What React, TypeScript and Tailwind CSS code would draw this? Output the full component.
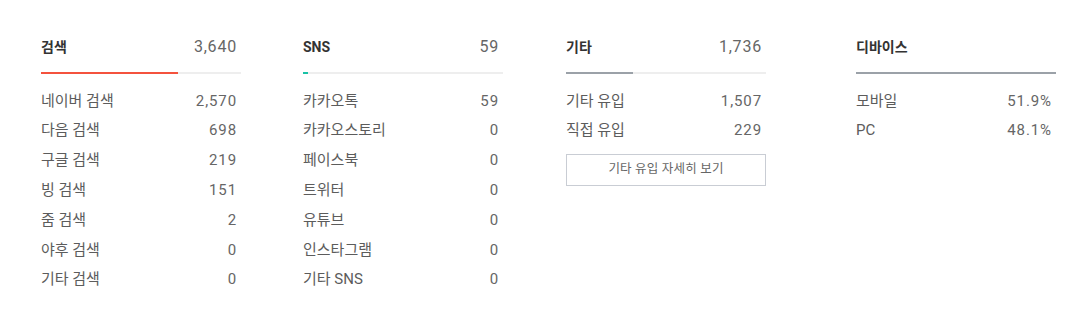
const FONT = { fontFamily: 'Roboto, "Noto Sans CJK KR", sans-serif' };

type Row = { label: string; value: string };

type Group = {
  title: string;
  total?: string;
  bar: string;
  barWidth: string;
  rows: Row[];
  button?: string;
  className: string;
};

const GROUPS: Group[] = [
  {
    title: '검색',
    total: '3,640',
    bar: 'bg-[#f4523d]',
    barWidth: 'w-[137px]',
    className: 'ml-[41px]',
    rows: [
      { label: '네이버 검색', value: '2,570' },
      { label: '다음 검색', value: '698' },
      { label: '구글 검색', value: '219' },
      { label: '빙 검색', value: '151' },
      { label: '줌 검색', value: '2' },
      { label: '야후 검색', value: '0' },
      { label: '기타 검색', value: '0' },
    ],
  },
  {
    title: 'SNS',
    total: '59',
    bar: 'bg-[#19c2a6]',
    barWidth: 'w-[5px]',
    className: 'ml-[62px]',
    rows: [
      { label: '카카오톡', value: '59' },
      { label: '카카오스토리', value: '0' },
      { label: '페이스북', value: '0' },
      { label: '트위터', value: '0' },
      { label: '유튜브', value: '0' },
      { label: '인스타그램', value: '0' },
      { label: '기타 SNS', value: '0' },
    ],
  },
  {
    title: '기타',
    total: '1,736',
    bar: 'bg-[#9ba1a8]',
    barWidth: 'w-[67px]',
    className: 'ml-[63px]',
    rows: [
      { label: '기타 유입', value: '1,507' },
      { label: '직접 유입', value: '229' },
    ],
    button: '기타 유입 자세히 보기',
  },
  {
    title: '디바이스',
    bar: 'bg-[#9ba1a8]',
    barWidth: 'w-full',
    className: 'ml-[90px]',
    rows: [
      { label: '모바일', value: '51.9%' },
      { label: 'PC', value: '48.1%' },
    ],
  },
];

function StatGroup({ group }: { group: Group }) {
  return (
    <div className={`w-[200px] shrink-0 ${group.className}`}>
      <div className="flex items-center justify-between pr-[4px] h-[30px]">
        <span className="text-[14px] font-bold text-[#333]">{group.title}</span>
        {group.total && (
          <span className="text-[16px] tracking-[0.8px] text-[#666]">{group.total}</span>
        )}
      </div>
      <div className="mt-[10px] h-[2px] bg-[#eeeeee]">
        <div className={`h-full ${group.bar} ${group.barWidth}`} />
      </div>
      <div className="mt-[12px]">
        {group.rows.map((row) => (
          <div
            key={row.label}
            className="flex items-center justify-between pr-[4px] h-[29.8px] text-[15px] text-[#5c5c5c]"
          >
            <span>{row.label}</span>
            <span className="text-[#666] tracking-[0.9px]">{row.value}</span>
          </div>
        ))}
      </div>
      {group.button && (
        <button className="mt-[8px] w-full h-[32px] border border-[#c9cdd4] bg-white text-[12.5px] tracking-[0.2px] text-[#666]">
          {group.button}
        </button>
      )}
    </div>
  );
}

export default function App() {
  return (
    <div className="w-[1087px] h-[329px] bg-white pt-[32px]" style={FONT}>
      <div className="flex items-start">
        {GROUPS.map((g) => (
          <StatGroup key={g.title} group={g} />
        ))}
      </div>
    </div>
  );
}
